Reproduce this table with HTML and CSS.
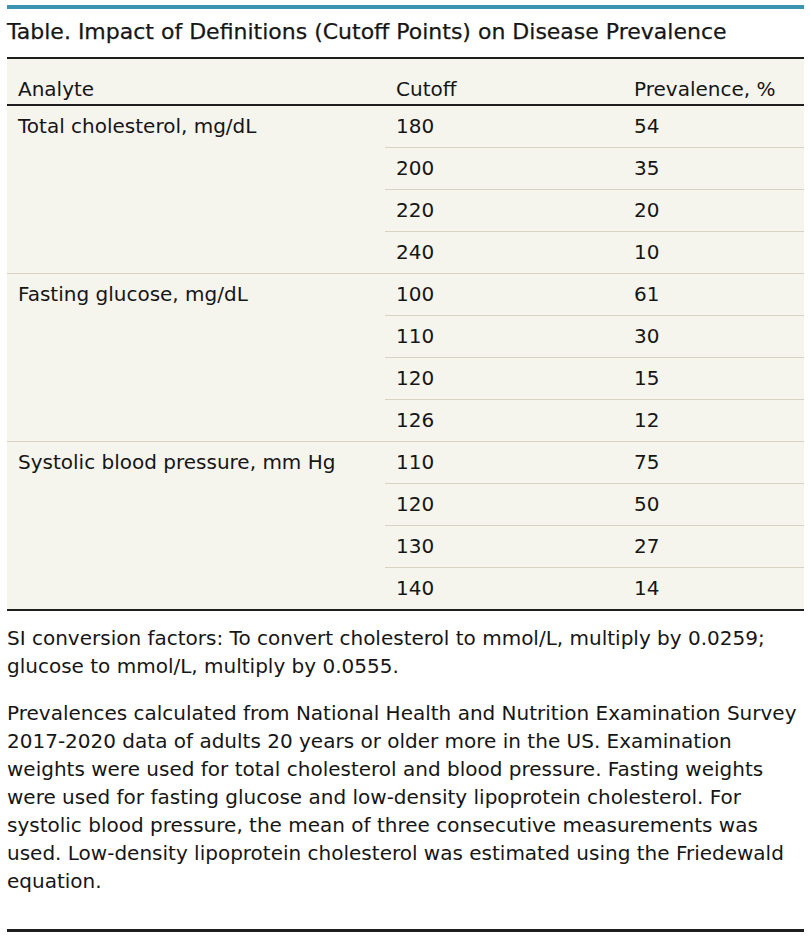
FILE: index.html
```html
<!DOCTYPE html>
<html lang="en">
<head>
<meta charset="utf-8">
<title>Table</title>
<link rel="stylesheet" href="styles.css">
</head>
<body>
<div class="figure">
  <div class="topbar"></div>
  <h1 class="title">Table. Impact of Definitions (Cutoff Points) on Disease Prevalence</h1>
  <table class="data">
    <colgroup>
      <col class="c1"><col class="c2"><col class="c3">
    </colgroup>
    <thead>
      <tr><th>Analyte</th><th>Cutoff</th><th>Prevalence, %</th></tr>
    </thead>
    <tbody>
      <tr><td rowspan="4" class="an">Total cholesterol, mg/dL</td><td>180</td><td>54</td></tr>
      <tr class="sub"><td>200</td><td>35</td></tr>
      <tr class="sub"><td>220</td><td>20</td></tr>
      <tr class="sub"><td>240</td><td>10</td></tr>
      <tr class="grp"><td rowspan="4" class="an">Fasting glucose, mg/dL</td><td>100</td><td>61</td></tr>
      <tr class="sub"><td>110</td><td>30</td></tr>
      <tr class="sub"><td>120</td><td>15</td></tr>
      <tr class="sub"><td>126</td><td>12</td></tr>
      <tr class="grp"><td rowspan="4" class="an">Systolic blood pressure, mm Hg</td><td>110</td><td>75</td></tr>
      <tr class="sub"><td>120</td><td>50</td></tr>
      <tr class="sub"><td>130</td><td>27</td></tr>
      <tr class="sub"><td>140</td><td>14</td></tr>
    </tbody>
  </table>
  <div class="notes">
    <p class="note">SI conversion factors: To convert cholesterol to mmol/L, multiply by 0.0259; glucose to mmol/L, multiply by 0.0555.</p>
    <p class="note">Prevalences calculated from National Health and Nutrition Examination Survey 2017-2020 data of adults 20 years or older more in the US. Examination weights were used for total cholesterol and blood pressure. Fasting weights were used for fasting glucose and low-density lipoprotein cholesterol. For systolic blood pressure, the mean of three consecutive measurements was used. Low-density lipoprotein cholesterol was estimated using the Friedewald equation.</p>
  </div>
</div>
</body>
</html>
```

FILE: styles.css
```css
html, body {
  margin: 0;
  padding: 0;
  background: #ffffff;
}
body {
  color: #161616;
  font-family: "DejaVu Sans", "Liberation Sans", sans-serif;
}
.figure {
  width: 797px;
  margin-left: 7px;
  padding-top: 5px;
}
.topbar {
  height: 4px;
  background: #3b95b0;
}
.title {
  margin: 0;
  height: 48px;
  line-height: 46px;
  font-size: 22px;
  font-weight: 400;
  -webkit-text-stroke: 0.25px #161616;
  white-space: nowrap;
}
.data {
  width: 797px;
  border-collapse: collapse;
  background: #f5f4ed;
  border-top: 2px solid #1e1e1e;
  border-bottom: 2px solid #1e1e1e;
  font-size: 20px;
  table-layout: fixed;
}
.c1 { width: 378px; }
.c2 { width: 238px; }
.c3 { width: 181px; }
.data th {
  text-align: left;
  font-weight: 400;
  height: 45px;
  padding: 0 11px;
  vertical-align: bottom;
  line-height: 30px;
  border-bottom: 2px solid #1e1e1e;
}
.data td {
  height: 41px;
  padding: 0 11px;
  line-height: 40px;
  vertical-align: top;
}
.data tr.sub td {
  border-top: 1px solid #d8d3c5;
}
.data tr.grp td {
  border-top: 1px solid #d8d3c5;
}
.notes {
  padding-top: 13px;
  padding-bottom: 34px;
  border-bottom: 3px solid #1e1e1e;
}
.note {
  margin: 0;
  font-size: 20px;
  line-height: 28px;
}
.note + .note {
  margin-top: 19px;
}
```
